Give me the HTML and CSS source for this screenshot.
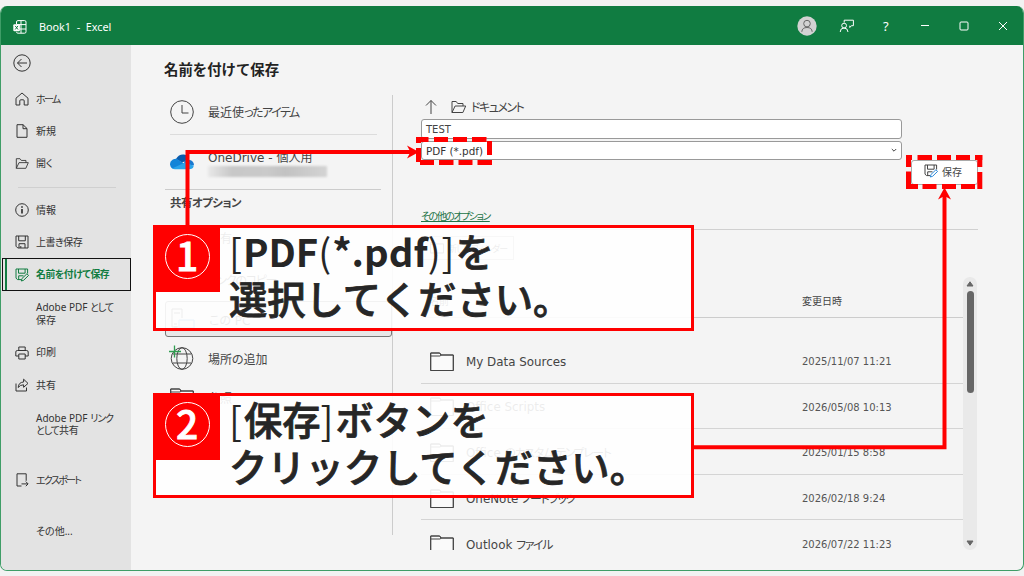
FILE: index.html
```html
<!DOCTYPE html>
<html lang="ja">
<head>
  <meta charset="UTF-8" />
  <meta name="viewport" content="width=device-width, initial-scale=1" />
  <title>Book1 - Excel</title>
  <link rel="stylesheet" href="styles.css">
</head>
<body>
  <svg class="defs" width="0" height="0">
    <symbol id="folder" viewBox="0 0 24 20">
      <path d="M.7 18.5V1h9l1.3 2h12.3v15.5z" fill="#fafafa"/>
      <path d="M.7 4h9.6L11 3M.7 18.5V1h9l1.3 2h12.3v15.5z"/>
    </symbol>
    <symbol id="open" viewBox="0 0 16 14">
      <path d="M1.5 12.5v-11h4.2l1.5 2h5.3V6M1.5 12.5 4.6 6h10.6l-2.8 6.5z"/>
    </symbol>
    <symbol id="save" viewBox="0 0 14 14">
      <path d="M1 1h12v12H2.8L1 11.2zM3.7 1v4.8h6.6V1M4 13V8.7h6V13M5.8 13v-2"/>
    </symbol>
    <symbol id="saveas" viewBox="0 0 14 14">
      <path d="M6 11.6H2.6L1 10.2V1h11.6v4.5M3.5 1v4.2h6.6V1M3.7 11.5V7.8h4.8"/>
      <path d="m6.3 13 .6-2.4 5-4.8 1.7 1.6-5 4.9z" stroke="currentColor"/>
    </symbol>
  </svg>

  <div class="window">
    <header class="titlebar">
      <svg class="logo" width="14" height="14" viewBox="0 0 14 14">
        <path d="M3.5 4V2q0-1.4 1.4-1.4h6.7q1.4 0 1.4 1.4v9.8q0 1.4-1.4 1.4H4.9q-1.4 0-1.4-1.4M8 .6v12.6M3.5 4.6H13M7 9h6"/>
        <rect x=".3" y="4.2" width="6.6" height="7" rx="1" fill="#fff" stroke="none"/>
        <path d="m2.2 5.9 2.8 3.6m0-3.6L2.2 9.5" stroke="#107c41"/>
      </svg>
      <span class="title">Book1 &nbsp;- &nbsp;Excel</span>
      <div class="controls">
        <svg width="20" height="20" viewBox="0 0 20 20">
          <circle cx="10" cy="10" r="9.7" fill="#d2d2d2" stroke="none"/>
          <g stroke="#666"><circle cx="10" cy="7.6" r="3.3"/><path d="M4.8 15.8q.3-4.3 5.2-4.3t5.2 4.3"/></g>
        </svg>
        <svg width="16" height="16" viewBox="0 0 16 16"><path d="M5.2 4.5V2.2h9.2v5.5h-2l-1.6 1.8V7.7M1.2 14q0-4 3.8-4t4 4"/><circle cx="5.1" cy="7.6" r="2.4"/></svg>
        <span class="help">?</span>
        <svg width="10" height="10" viewBox="0 0 10 10"><path d="M1 4.5h8"/></svg>
        <svg width="10" height="10" viewBox="0 0 10 10"><rect x="1" y="1" width="8" height="8" rx="1"/></svg>
        <svg width="10" height="10" viewBox="0 0 10 10"><path d="m1 1 8 8M9 1 1 9"/></svg>
      </div>
    </header>

    <div class="body">
      <nav class="sidebar">
        <div class="back"><svg width="18" height="18" viewBox="0 0 18 18"><circle cx="9" cy="9" r="8.2"/><path d="M14 9H4.5m4-4-4 4 4 4"/></svg></div>
        <div class="item"><svg width="14" height="14" viewBox="0 0 14 14"><path d="M1 6.2 7 1l6 5.2V13H9.2V8.8q0-1-1-1H5.8q-1 0-1 1V13H1z"/></svg><span class="kana">ホーム</span></div>
        <div class="item"><svg width="14" height="14" viewBox="0 0 14 14"><path d="M2 .7h6L12 4.5v8.8H2zM8 .7v4h4"/></svg><span>新規</span></div>
        <div class="item"><svg width="14" height="13"><use href="#open"/></svg><span>開<i>く</i></span></div>
        <hr>
        <div class="item"><svg width="14" height="14" viewBox="0 0 14 14"><circle cx="7" cy="7" r="6.3"/><path d="M7 6v4.5M7 3.3v1.5" stroke-width="1.7"/></svg><span>情報</span></div>
        <div class="item"><svg width="14" height="14"><use href="#save"/></svg><span class="tight">上書き保存</span></div>
        <div class="item active"><svg width="14" height="14"><use href="#saveas"/></svg><span>名前を付けて保存</span></div>
        <div class="item two"><span>Adobe PDF <i>として</i><br>保存</span></div>
        <div class="item"><svg width="14" height="14" viewBox="0 0 14 14"><path d="M3.8 4.5V1h6.4v3.5M3.8 10H.8V6q0-1.5 1.5-1.5h9.4q1.5 0 1.5 1.5v4h-3M3.8 8h6.4v5H3.8z"/></svg><span>印刷</span></div>
        <div class="item"><svg width="14" height="14" viewBox="0 0 14 14"><path d="M1 5.5V13h10.5V9.5M3.2 9.5Q3.5 4.3 8.6 4V1.2L13 5.4 8.6 9.3V6.8Q5 6.8 3.2 9.5z"/></svg><span>共有</span></div>
        <div class="item two link"><span>Adobe PDF <i>リンク<br>として</i>共有</span></div>
        <div class="item export"><svg width="14" height="14" viewBox="0 0 14 14"><path d="M6.5 13H2V.8h9.2v7M6.5 10.9H13m-2.2-2.3 2.3 2.3-2.3 2.3"/></svg><span class="kana">エクスポート</span></div>
        <div class="item other"><span>その他...</span></div>
      </nav>

      <main>
        <h1>名前を付けて保存</h1>
        <div class="columns">
          <section class="places">
            <div class="place recent"><svg width="24" height="24" viewBox="0 0 24 24"><circle cx="12" cy="12" r="11.3"/><path d="M12 5v8h6.5"/></svg><span>最近使<i>ったアイテム</i></span></div>
            <div class="place onedrive">
              <svg width="24" height="16" viewBox="0 0 24 16">
                <g stroke="none">
                  <path d="M6 5Q9 0 14 .6q4 .6 5 5l-7 3z" fill="#0a5cad"/>
                  <path d="M1.6 14Q-1 11 .8 7.6 2.5 4.5 6.5 4.7L15 10 3.6 15z" fill="#1284d8"/>
                  <path d="M14 7.5q2.5-3 6-1.5 4 1.4 4 5.2L15 12z" fill="#1a78cf"/>
                  <path d="m2 14.5 13-6 8.8 3.2Q23 15.3 19 15.3H5q-2 0-3-.8z" fill="#2aa3ea"/>
                </g>
              </svg>
              <div><span>OneDrive - 個人用</span><p class="account"></p></div>
            </div>
            <h2>共有オプション</h2>
            <div class="place share"><svg width="24" height="22" viewBox="0 0 24 22"><path d="M3 8v13h16v-5M7 13q1-7 9-7V1l7 7-7 6v-4q-6 0-9 3z"/></svg><span>共有</span></div>
            <div class="place copy"><svg width="24" height="20" viewBox="0 0 24 20"><path d="M10 5H6a5 5 0 0 0 0 10h4m4-10h4a5 5 0 0 1 0 10h-4M7 10h10"/></svg><span><i>リンクのコピー</i></span></div>
            <div class="place pc"><svg width="24" height="22" viewBox="0 0 24 22"><path d="M7 19H1V1h10v9M3 5h6M3 16h3M3 19h3"/><path d="M8 12h15v8H8z" stroke="#2b88d8"/></svg><span>この PC</span></div>
            <div class="place add">
              <svg width="26" height="26" viewBox="0 0 26 26"><circle cx="13" cy="13.5" r="10.8"/><ellipse cx="13" cy="13.5" rx="5.2" ry="10.8"/><path d="M3.5 9h19M3.5 18h19"/><path d="M0 6.5h12M5.5 .5v12" stroke="#2f9e50" stroke-width="1.3"/></svg>
              <span>場所の追加</span>
            </div>
            <div class="place browse"><svg width="24" height="20"><use href="#folder"/></svg><span>参照</span></div>
          </section>

          <section class="files">
            <div class="path">
              <svg width="12" height="16" viewBox="0 0 12 16"><path d="M6 15V1.5M1 6.5l5-5 5 5"/></svg>
              <svg class="dir" width="17" height="14"><use href="#open"/></svg>
              <span>ドキュメント</span>
            </div>
            <div class="form">
              <div class="fields">
                <div class="field name">TEST</div>
                <div class="field type">PDF (*.pdf)<svg width="6" height="5" viewBox="0 0 6 5"><path d="m.8 1 2.2 2.2L5.2 1"/></svg></div>
              </div>
              <div class="save"><svg width="14" height="14"><use href="#saveas"/></svg><span>保存</span></div>
            </div>
            <div class="more"><a>その他のオプション</a></div>
            <div class="new"><svg width="14" height="12"><use href="#folder"/></svg><span>新しいフォルダー</span></div>
            <div class="list">
              <div class="rows">
                <div class="head"><span>名前</span><b>変更日時</b></div>
                <div class="row"><svg width="24" height="20"><use href="#folder"/></svg><span>My Data Sources</span><time>2025/11/07 11:21</time></div>
                <div class="row"><svg width="24" height="20"><use href="#folder"/></svg><span>Office Scripts</span><time>2026/05/08 10:13</time></div>
                <div class="row"><svg width="24" height="20"><use href="#folder"/></svg><span>Office <i>のカスタム テンプレート</i></span><time>2025/01/15 8:58</time></div>
                <div class="row"><svg width="24" height="20"><use href="#folder"/></svg><span>OneNote <i>ノートブック</i></span><time>2026/02/18 9:24</time></div>
                <div class="row last"><svg width="24" height="20"><use href="#folder"/></svg><span>Outlook <i>ファイル</i></span><time>2026/07/22 11:23</time></div>
              </div>
              <div class="scrollbar">
                <svg width="8" height="6" viewBox="0 0 8 6"><path d="M4 .8 7 5H1z"/></svg>
                <div class="thumb"></div>
                <svg class="down" width="8" height="6" viewBox="0 0 8 6"><path d="M4 5.2 7 1H1z"/></svg>
              </div>
            </div>
          </section>
        </div>
      </main>
    </div>
  </div>

  <!-- 手順の吹き出し -->
  <div class="callout first">
    <div class="badge"><span>1</span></div>
    <p><span class="latin"><em>[</em>PDF<em>(</em>*.pdf<em>)]</em></span>を<br>選択してください。</p>
  </div>
  <div class="callout second">
    <div class="badge"><span>2</span></div>
    <p><em>[</em>保存<em>]</em>ボタンを<br>クリックしてください。</p>
  </div>

  <!-- 矢印と点線の枠 -->
  <svg class="marks" width="1024" height="576" viewBox="0 0 1024 576">
    <path class="line" d="M187.5 227V152H411M693 447.2H944.5V194"/>
    <path class="tip" d="m419 152-12-6.5 3.5 6.5-3.5 6.5zM944.5 187.5l-6.5 12 6.5-3.5 6.5 3.5z"/>
    <path class="dash" d="M416 139.5h12.5M434 139.5h14M453 139.5h14M472 139.5h14.5M418.500 138v5M418.500 148v14M489.500 141v14M420 162.500h14M439 162.500h14.500M458.500 162.500h14M477.500 162.500h14.500"/>
    <path class="dash" d="M906 157.500h6M917.500 157.500h14.500M937 157.500h14M956 157.500h14M975 157.500h7.500M908.500 155v12M908.500 171.500v15M979.800 155v12M979.800 172v14M906 186.500h12M922.500 186.500h14M942 186.500h14M961 186.500h14M979.800 186v3"/>
  </svg>
</body>
</html>
```

FILE: styles.css
```css
* {
  box-sizing: border-box;
}
body {
  margin: 0;
  padding-top: 6px;
  height: 576px;
  overflow: hidden;
  position: relative;
  background: #f2f2f2;
  font-family: "DejaVu Sans", "Noto Sans CJK JP", sans-serif;
  font-feature-settings: "palt";
  font-size: 12px;
  color: #444;
}
svg {
  fill: none;
  stroke: #444;
  flex: none;
  display: block;
}
i {
  font-style: normal;
  letter-spacing: -1.3px;
}
.defs {
  position: absolute;
}
.window {
  height: 565px;
  border: 1px solid #3f9d67;
  border-top: 0;
  border-radius: 7px;
  overflow: hidden;
  background: #f4f4f4;
}

/* タイトルバー */
.titlebar {
  height: 39px;
  background: #107c41;
  color: #fff;
  display: flex;
  align-items: center;
  padding: 2px 14px 0 12px;
}
.titlebar svg {
  stroke: #fff;
}
.title {
  font: 10.8px "Noto Sans", sans-serif;
  margin: 0 0 0 12px;
}
.controls {
  margin-left: auto;
  display: grid;
  grid-template-columns: repeat(6, 39.2px);
  justify-items: center;
  align-items: center;
  margin-right: -14px;
  margin-top: -2px;
}
.help {
  font: 13px "Noto Sans", sans-serif;
}

.body {
  display: flex;
  height: 525px;
}

/* 左メニュー */
.sidebar {
  width: 130px;
  background: #e3e3e3;
  font-family: "Noto Sans", "Noto Sans CJK JP", sans-serif;
  font-size: 10px;
  color: #333;
}
.sidebar svg {
  stroke: #333;
}
.back {
  height: 38px;
  padding: 9px 0 0 12px;
}
.item {
  height: 32.3px;
  display: flex;
  align-items: center;
  gap: 7px;
  padding-left: 14px;
  line-height: 12.5px;
}
.item i {
  letter-spacing: -1.1px;
}
.kana {
  letter-spacing: -1.7px;
}
.tight {
  letter-spacing: -0.5px;
}
.sidebar hr {
  margin: 7px 15px 6px 17px;
  border: 0;
  border-top: 1px solid #d0d0d0;
}
.sidebar .active {
  height: 33px;
  border: 1px solid #111;
  box-shadow: inset 2px 0 #e3e3e3, inset 4px 0 #107c41;
  margin-left: 1px;
  padding: 1px 0 0 12px;
  color: #107c41;
  font-weight: bold;
  font-size: 9.8px;
  letter-spacing: -0.4px;
}
.sidebar .active svg {
  stroke: #107c41;
}
.two {
  height: 45px;
  padding-left: 35px;
}
.link {
  height: 47px;
  padding-bottom: 1px;
}
.export {
  margin-top: 16px;
}
.other {
  margin-top: 19px;
  padding-left: 35px;
}

/* 保存先 */
main {
  flex: 1;
  padding-left: 33px;
}
h1 {
  margin: 0;
  padding-top: 15px;
  height: 50px;
  font-size: 14.4px;
  line-height: 21px;
  color: #222;
  font-feature-settings: normal;
}
.columns {
  display: flex;
  height: 455px;
}
.places {
  width: 229px;
  height: 440px;
  border-right: 1px solid #ccc;
  padding-left: 1px;
}
.place {
  display: flex;
  align-items: center;
  gap: 14px;
  padding-left: 5px;
}
.recent {
  height: 40px;
  margin: 0 15px 0 5px;
  padding: 0 0 6px;
  border-bottom: 1px solid #dcdcdc;
}
.recent i {
  letter-spacing: -1.5px;
}
.onedrive {
  height: 55px;
  margin-right: 11px;
  border-bottom: 1px solid #ccc;
}
.onedrive span {
  display: block;
  line-height: 16px;
  margin-top: 3px;
}
.account {
  width: 119px;
  height: 11px;
  margin: 0;
  background: linear-gradient(90deg, #e8e8e8, #c8c8c8 20%, #cacaca 50%, #c2c2c2 65%, #d4d4d4);
  filter: blur(1px);
}
h2 {
  margin: 0;
  padding: 5px 0 0 5px;
  height: 26px;
  font-size: 11.5px;
  line-height: 17px;
  letter-spacing: -0.6px;
}
.share, .copy {
  height: 42px;
}
.pc {
  height: 36px;
  margin-top: 1px;
  border: 1px solid #777;
  border-radius: 3px;
  background: #e8e8e8;
}
.add {
  height: 42px;
  gap: 13px;
  padding-left: 4px;
}
.browse {
  height: 37px;
}

/* ファイル一覧 */
.files {
  width: 557px;
  margin-left: 28px;
}
.path {
  display: flex;
  align-items: center;
  height: 24px;
  padding: 0 0 1px 4px;
}
.path .dir {
  margin: 0 4px 0 13px;
}
.path span {
  letter-spacing: -1.5px;
}
.form {
  display: flex;
  justify-content: space-between;
}
.fields {
  width: 481px;
}
.field {
  display: flex;
  align-items: center;
  height: 20px;
  padding: 0 4px;
  border: 1px solid #999;
  border-radius: 3px;
  background: #fff;
  font-size: 10px;
}
.type {
  height: 19px;
  margin-top: 2px;
  justify-content: space-between;
  font-size: 10.4px;
  color: #333;
}
.save {
  width: 67px;
  height: 25px;
  margin-top: 41px;
  display: flex;
  align-items: center;
  padding: 0 0 3px 12px;
  gap: 4px;
  background: #fff;
  border: 1px solid #aaa;
  border-radius: 3px;
  font-size: 10px;
}
.save svg {
  color: #2b88d8;
}
.more {
  height: 45px;
  padding-top: 24px;
  border-bottom: 1px solid #d0d0d0;
  font-size: 10px;
  line-height: 16px;
}
.more a {
  color: #217346;
  text-decoration: underline;
  letter-spacing: -1.5px;
}
.new {
  width: 93px;
  height: 24px;
  margin: 6px 0 17px;
  display: flex;
  align-items: center;
  padding-left: 8px;
  gap: 4px;
  border: 1px solid #aaa;
  font-size: 9px;
  white-space: nowrap;
}
.new span {
  letter-spacing: -0.7px;
}
.list {
  display: flex;
  height: 273px;
}
.rows {
  width: 542px;
  overflow: hidden;
}
.head {
  display: flex;
  height: 41px;
  padding: 6px 0 0 8px;
  align-items: center;
  border-bottom: 1px solid #ccc;
  font-size: 10px;
  margin-bottom: 20px;
}
.head span {
  width: 373px;
}
.head b {
  font-weight: normal;
}
.row {
  display: flex;
  align-items: center;
  height: 45.6px;
  border-bottom: 1px solid #d4d4d4;
  padding: 3px 0 0 9px;
}
.row span {
  width: 336px;
  margin-left: 12px;
  font-size: 11.9px;
  line-height: 14px;
}
.row time {
  font-size: 10px;
  color: #555;
}
.last {
  border-bottom: 0;
}
.scrollbar {
  width: 14px;
  padding: 4px 0;
  border-radius: 7px;
  background: #e9e9e9;
  display: flex;
  flex-direction: column;
  align-items: center;
}
.scrollbar svg {
  fill: #666;
  stroke: #666;
}
.thumb {
  width: 7px;
  height: 102px;
  margin-top: 4px;
  border-radius: 4px;
  background: #666;
}
.scrollbar .down {
  margin-top: auto;
}

/* 吹き出し */
.callout {
  position: absolute;
  left: 153px;
  width: 541px;
  height: 106px;
  border: 3px solid #f00;
  background: rgba(255, 255, 255, 0.9);
  display: flex;
  color: #262626;
}
.first {
  top: 225px;
}
.second {
  top: 393px;
  height: 105px;
}
.badge {
  width: 67px;
  height: 67px;
  margin: -3px 0 0 -3px;
  background: #f00;
  display: flex;
  align-items: center;
  justify-content: center;
}
.badge span {
  width: 45px;
  height: 45px;
  margin-top: -4px;
  margin-left: 1px;
  border: 1.5px solid #fff;
  border-radius: 50%;
  color: #fff;
  font: 500 39px/39px "Noto Sans CJK JP", sans-serif;
  -webkit-text-stroke: 0.8px #fff;
  text-align: center;
}
.callout p {
  margin: -1px 0 0 9px;
  font: 500 38.3px/47px "Noto Sans CJK JP", sans-serif;
  font-feature-settings: normal;
  -webkit-text-stroke: 0.8px #262626;
  white-space: nowrap;
}
.callout em {
  font-style: normal;
  font-weight: normal;
  letter-spacing: 2px;
  -webkit-text-stroke: 0;
}
.latin {
  font-weight: bold;
  -webkit-text-stroke: 0;
}
.latin em {
  letter-spacing: 1px;
}
.marks {
  position: absolute;
  left: 0;
  top: 0;
}
.line {
  stroke: #f00;
  stroke-width: 4;
}
.tip {
  fill: #f00;
  stroke: none;
}
.dash {
  stroke: #f00;
  stroke-width: 5;
}
```
